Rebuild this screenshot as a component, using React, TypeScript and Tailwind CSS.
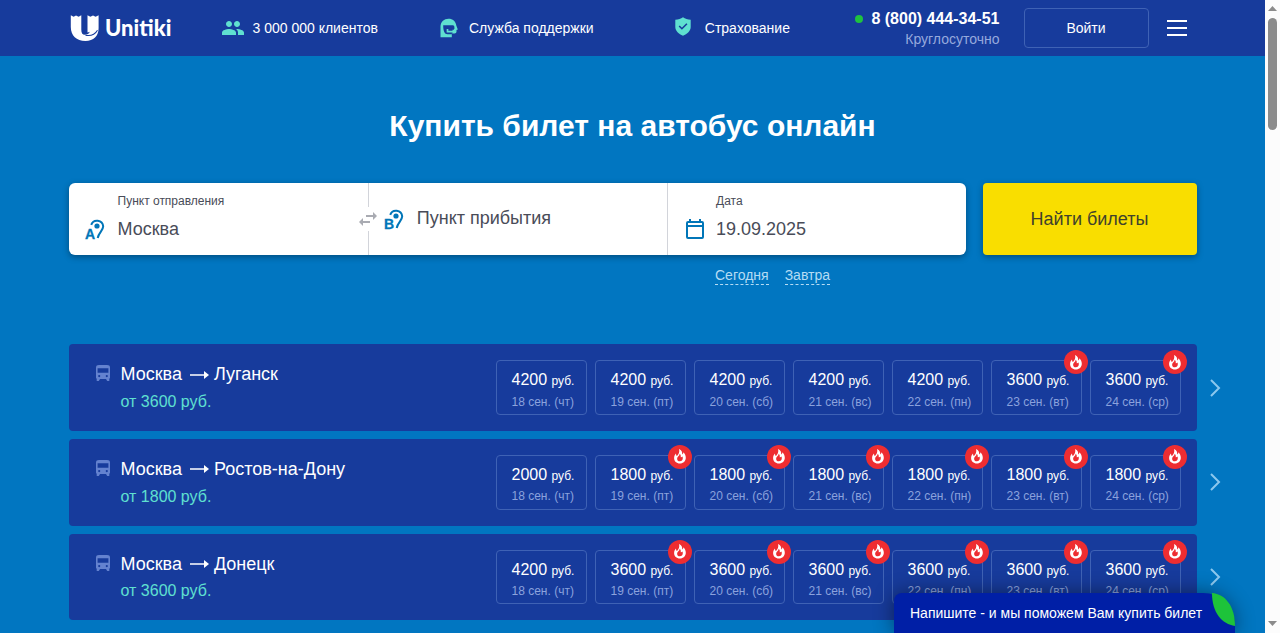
import { MdPeople } from "react-icons/md";

type Offer = { price: number; hot?: boolean };

type Route = {
  from: string;
  to: string;
  minPrice: number;
  offers: Offer[];
};

const DATES = [
  "18 сен. (чт)",
  "19 сен. (пт)",
  "20 сен. (сб)",
  "21 сен. (вс)",
  "22 сен. (пн)",
  "23 сен. (вт)",
  "24 сен. (ср)",
];

const hot = (price: number, count: number): Offer[] =>
  Array.from({ length: count }, () => ({ price, hot: true }));

const ROUTES: Route[] = [
  {
    from: "Москва",
    to: "Луганск",
    minPrice: 3600,
    offers: [
      { price: 4200 },
      { price: 4200 },
      { price: 4200 },
      { price: 4200 },
      { price: 4200 },
      ...hot(3600, 2),
    ],
  },
  {
    from: "Москва",
    to: "Ростов-на-Дону",
    minPrice: 1800,
    offers: [{ price: 2000 }, ...hot(1800, 6)],
  },
  {
    from: "Москва",
    to: "Донецк",
    minPrice: 3600,
    offers: [{ price: 4200 }, ...hot(3600, 6)],
  },
];

function Logo() {
  return (
    <div className="flex w-[152px] items-center">
      <svg className="ml-px h-7 w-[30px]" viewBox="0 0 30 28" fill="#fff">
        <path d="M.8 1.300 3.600 2.800 6 1.600 8.600 2.800 11.300 1.300v14.200c0 3.300 1 5.300 3.500 5.300 2.600 0 4.300-1.200 5-3-.9.500-1.800.600-2.300.6V1.300L20.400 2.800 23 1.600 25.600 2.800 28.600 1.300v13C28.600 22 23.500 27 15.500 27 6.500 27 .8 21.500.8 13Z" />
        <path
          d="M15.500 21.300c4.500.8 9.500-.8 12-5"
          stroke="#173b9c"
          strokeWidth="1.100"
          fill="none"
        />
      </svg>
      <span className="ml-[5px] font-['Lato'] text-[22px] leading-7 font-black text-white">
        Unitiki
      </span>
    </div>
  );
}

function SupportIcon() {
  return (
    <svg className="h-5 w-[18px]" viewBox="0 0 18 20">
      <path
        d="M.5 19.200V8C1 3.700 4 .8 8.500.8c4.300 0 7.200 2.700 7.800 6.700L17.800 11.500l-1.300.5v1.500c0 1.200-.8 2-2 2h-2.700v3.700Z"
        fill="#5fe0d0"
      />
      <path
        d="M3.200 7.300h9.600c1 0 1.600.8 1.600 2v2.500h-1.900v3.700h-.7v.8H7.500C4.700 16.300 3.200 13.500 3.200 7.300Z"
        fill="#173b9c"
      />
      <path
        d="M7.500 11v2.700h7.300V11"
        fill="none"
        stroke="#5fe0d0"
        strokeWidth="1.700"
      />
    </svg>
  );
}

function ShieldIcon() {
  return (
    <svg className="h-[19px] w-4" viewBox="0 0 16 19">
      <path
        d="M8 .3c2.200 1.500 4.600 2.300 7.700 2.500v7.300c0 4-3.500 7-7.700 8.600C3.800 17.100.3 14.100.3 10.100V2.800C3.400 2.600 5.800 1.800 8 .3Z"
        fill="#5fe0d0"
      />
      <path d="m4.200 9 2.700 2.700 5-5" fill="none" stroke="#173b9c" strokeWidth="1.600" />
    </svg>
  );
}

function PinIcon({ letter }: { letter: string }) {
  return (
    <svg className="h-6 w-6" viewBox="0 0 24 24">
      <path
        d="M8.200 7.800A6.200 6.200 0 0 1 20.200 9.300c0 4.200-4.400 6-5.500 11.700"
        fill="none"
        stroke="#0176b8"
        strokeWidth="2"
      />
      <circle cx="14" cy="9" r="2.600" fill="#0176b8" />
      <text
        x="2"
        y="22"
        fontSize="14"
        fontWeight="bold"
        fill="#0176b8"
        stroke="#0176b8"
        strokeWidth="0.300"
        fontFamily="Liberation Sans, sans-serif"
      >
        {letter}
      </text>
    </svg>
  );
}

function CalendarIcon() {
  return (
    <svg className="h-5 w-[18px]" viewBox="0 0 18 20" fill="#0176b8">
      <path
        fillRule="evenodd"
        d="M3 0h2v2h8V0h2v2h1a2 2 0 0 1 2 2v14a2 2 0 0 1-2 2H2a2 2 0 0 1-2-2V4a2 2 0 0 1 2-2h1ZM2 4v2h14V4Zm0 4v10h14V8Z"
      />
    </svg>
  );
}

function BusIcon() {
  return (
    <svg className="h-4 w-3.5" viewBox="0 0 14 16" fill="#6482cf">
      <path
        fillRule="evenodd"
        d="M3 0h8C13 0 14 .8 14 2.500V12.500c0 .6-.3 1-.7 1.300V16h-2.100L10 14H4l-1.200 2H.7v-2.200C.3 13.500 0 13.100 0 12.500V2.500C0 .8 1 0 3 0ZM1.600 3.200V7.700h10.800V3.200ZM3.200 10a1.100 1.100 0 1 0 0 2.200 1.100 1.100 0 0 0 0-2.200Zm7.600 0a1.100 1.100 0 1 0 0 2.200 1.100 1.100 0 0 0 0-2.200Z"
      />
    </svg>
  );
}

function FlameIcon() {
  return (
    <svg className="mr-px h-[15px] w-3" viewBox="0 0 12 15" fill="#fff">
      <path d="M5 0C7.600 1.200 8.600 3.200 8.100 5.400c.9-.5 1.300-1.200 1.300-2.200C11 4.700 11.800 6.500 11.800 8.700c0 3.400-2.500 5.800-5.900 5.800S.1 12.200.1 9c0-1.900.7-3.300 1.900-4.500 0 1.200.3 2.100 1 2.600C4.700 5.300 5.900 2.800 5 0Z" />
      <path
        d="M5.700 4.800C5.600 7 3.100 7.700 3.100 9.700c0 1.600 1.100 2.600 2.700 2.600 1.800 0 3-1.300 3-3.100 0-.6-.1-1.200-.3-1.700-.5.6-1.100.8-1.800.7.3-1.300 0-2.500-1-3.400Z"
        fill="#ee2d31"
      />
    </svg>
  );
}

function Header() {
  return (
    <header className="flex h-14 items-center bg-[#173b9c] pl-[69px] text-sm text-white">
      <Logo />
      <div className="flex w-[219px] items-center">
        <MdPeople className="h-6 w-6 text-[#5fe0d0]" />
        <span className="ml-[7.5px]">3 000 000 клиентов</span>
      </div>
      <div className="flex w-[235px] items-center">
        <SupportIcon />
        <span className="ml-[11px]">Служба поддержки</span>
      </div>
      <div className="flex w-[150px] items-center">
        <span className="mb-[3px]">
          <ShieldIcon />
        </span>
        <span className="ml-[13.8px]">Страхование</span>
      </div>
      <div className="w-[174.5px] pt-0.5 text-right">
        <div className="flex items-center justify-end text-base leading-5 font-bold">
          <span className="mr-2 h-2 w-2 rounded-full bg-[#1fc23f]" />8 (800) 444-34-51
        </div>
        <div className="leading-[21px] text-[#96a9dc]">Круглосуточно</div>
      </div>
      <button className="ml-[24.5px] h-10 w-[125px] rounded border border-[#3f62b5] pr-px">
        Войти
      </button>
      <div className="ml-[18px] flex w-5 flex-col gap-[5px]">
        <span className="h-0.5 bg-white" />
        <span className="h-0.5 bg-white" />
        <span className="h-0.5 bg-white" />
      </div>
    </header>
  );
}

function SearchForm() {
  return (
    <section className="mt-[37px] flex h-[72px] gap-[17px] text-lg text-[#494c58]">
      <div className="flex w-[897px] rounded-md bg-white shadow-[0_2px_6px_rgba(0,0,0,0.35)]">
        <div className="relative flex w-[300px] border-r border-[#d2d4da]">
          <div className="mt-[34px] ml-[14px]">
            <PinIcon letter="A" />
          </div>
          <div className="ml-[10.5px]">
            <div className="mt-2.5 text-xs leading-4">Пункт отправления</div>
            <div className="mt-[6px] leading-7">Москва</div>
          </div>
          <div className="absolute top-6 -right-3 flex h-6 w-6 items-center justify-center bg-white">
            <svg
              className="h-4 w-[18px]"
              viewBox="0 0 18 16"
              fill="none"
              stroke="#a9abb2"
              strokeWidth="2"
            >
              <path d="M7 5h8M11 11H3" />
              <path d="m14 1 4 4-4 4ZM4 7l-4 4 4 4Z" fill="#a9abb2" stroke="none" />
            </svg>
          </div>
        </div>
        <div className="flex w-[299px] items-center border-r border-[#d2d4da]">
          <div className="ml-[13px]">
            <PinIcon letter="B" />
          </div>
          <div className="-mt-0.5 ml-[10.8px]">Пункт прибытия</div>
        </div>
        <div className="flex">
          <div className="mt-9 ml-[18px]">
            <CalendarIcon />
          </div>
          <div className="ml-3">
            <div className="mt-2.5 text-xs leading-4">Дата</div>
            <div className="mt-[6px] leading-7">19.09.2025</div>
          </div>
        </div>
      </div>
      <button className="w-[214px] rounded bg-[#f9de00] pr-px text-[#40422c] shadow-[0_2px_6px_rgba(0,0,0,0.35)]">
        Найти билеты
      </button>
    </section>
  );
}

function OfferCell({ offer, date }: { offer: Offer; date: string }) {
  return (
    <div className="relative h-[54.6px] w-[91px] rounded border border-[#3f62b5] pl-[14.5px] whitespace-nowrap">
      <div className="mt-[9px] text-base leading-5 text-white">
        {offer.price} <span className="text-xs">руб.</span>
      </div>
      <div className="mt-[3.3px] text-xs leading-4 text-[#8ba2dd]">{date}</div>
      {offer.hot && (
        <span className="absolute -top-[11px] -right-[7px] flex h-6 w-6 items-center justify-center rounded-full bg-[#ee2d31]">
          <FlameIcon />
        </span>
      )}
    </div>
  );
}

function RouteRow({ route }: { route: Route }) {
  return (
    <div className="flex items-center">
      <div className="flex h-[86.6px] w-[1128px] rounded bg-[#173b9c] pt-4 pr-4 pl-[27px]">
        <div className="mt-[5px]">
          <BusIcon />
        </div>
        <div className="ml-[10.5px] flex-1">
          <div className="flex items-center text-lg leading-7 text-white">
            {route.from}
            <svg className="mt-px mr-1 ml-2 h-2 w-5" viewBox="0 0 20 8" fill="#fff">
              <path d="M0 3.200h14V0l5 4-5 4V4.800H0Z" />
            </svg>
            {route.to}
          </div>
          <div className="mt-[0.7px] leading-[26px] text-[#5fe0d0]">
            от {route.minPrice} руб.
          </div>
        </div>
        <div className="flex gap-2">
          {route.offers.map((offer, i) => (
            <OfferCell key={DATES[i]} offer={offer} date={DATES[i]} />
          ))}
        </div>
      </div>
      <svg
        className="ml-3 h-[18px] w-3"
        viewBox="0 0 12 18"
        fill="none"
        stroke="#8cc8ee"
        strokeWidth="2"
      >
        <path d="m2 1 8 8-8 8" />
      </svg>
    </div>
  );
}

function ChatBar() {
  return (
    <div className="absolute bottom-0 left-[894px] h-10 w-[341px] rounded-tl-lg rounded-tr-[32px] bg-[#001fa6] pl-4 text-sm leading-10 text-white shadow-[0_0_20px_rgba(0,0,0,0.45)]">
      Напишите - и мы поможем Вам купить билет
      <svg className="absolute top-0 right-0 h-[33px] w-[23px]" viewBox="0 0 23 33">
        <path d="M0 0C13 1 23 13 23 33 10 31 0 20 0 0Z" fill="#1dc33a" />
      </svg>
    </div>
  );
}

function Scrollbar() {
  return (
    <div className="flex w-[15px] flex-col items-center bg-[#fcfcfc]">
      <svg className="mt-1.5 h-[5px] w-[9px]" viewBox="0 0 9 5" fill="#8b8b8b">
        <path d="M4.500 0 9 5H0Z" />
      </svg>
      <div className="mt-[7px] h-28 w-[9px] rounded-full bg-[#8b8b8b]" />
      <svg className="mt-auto mb-[7px] h-[5px] w-[9px]" viewBox="0 0 9 5" fill="#8b8b8b">
        <path d="M0 0h9L4.500 5Z" />
      </svg>
    </div>
  );
}

export default function App() {
  return (
    <div className="flex h-[633px] w-[1280px] overflow-hidden font-['Liberation_Sans',Arial,sans-serif]">
      <div className="relative w-[1265px] overflow-hidden bg-[#0176c1]">
        <Header />
        <main className="pl-[69px]">
          <h1 className="mt-[50px] w-[1127px] text-center text-[30px] leading-10 font-bold text-white">
            Купить билет на автобус онлайн
          </h1>
          <SearchForm />
          <div className="mt-[11px] ml-[646px] flex gap-4 text-sm leading-[18px] text-[#b5dcf4]">
            <span className="border-b border-dashed">Сегодня</span>
            <span className="border-b border-dashed">Завтра</span>
          </div>
          <div className="mt-[59.4px] flex flex-col gap-2">
            {ROUTES.map((route) => (
              <RouteRow key={route.to} route={route} />
            ))}
          </div>
        </main>
        <ChatBar />
      </div>
      <Scrollbar />
    </div>
  );
}
